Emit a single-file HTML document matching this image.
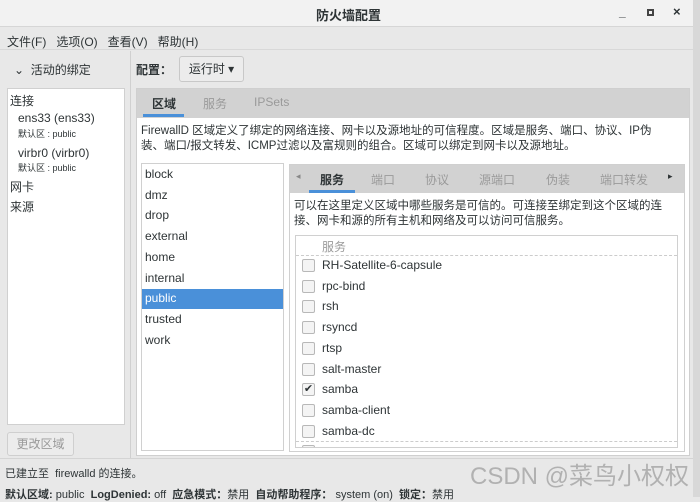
<!DOCTYPE html>
<html><head><meta charset="utf-8"><style>
*{margin:0;padding:0;box-sizing:border-box}
body{width:700px;height:497px;overflow:hidden;background:#e8e8e8;font-family:"Liberation Sans","Noto Sans CJK SC",sans-serif;font-size:12px;color:#2e3436;position:relative}
.a{position:absolute;white-space:nowrap}
.cb{position:absolute;left:6px;width:13px;height:13px;border:1px solid #b8b8b8;border-radius:2px;background:#f4f4f4}
.row{position:absolute;left:0;height:20px;width:100%}
.row span{position:absolute;left:26px;top:2px}
</style></head><body>
<div class="a" style="left:0;top:0;width:700px;height:27px;background:#f2f2f2;border-bottom:1px solid #d6d6d6"></div>
<div class="a" style="left:316px;top:5px;font-weight:bold;font-size:13px">防火墙配置</div>
<div class="a" style="left:619px;top:5px;font-weight:bold">_</div>
<div class="a" style="left:647px;top:9px;width:7px;height:7px;border:2px solid #444"></div>
<div class="a" style="left:673px;top:4px;font-weight:bold;font-size:13px">×</div>
<div class="a" style="left:693px;top:0;width:7px;height:497px;background:#d8d8d8"></div>
<div class="a" style="left:0;top:28px;width:693px;height:22px;border-bottom:1px solid #d8d8d8"></div>
<div class="a" style="left:7px;top:33px">文件(F)&nbsp;&nbsp; 选项(O)&nbsp;&nbsp; 查看(V)&nbsp;&nbsp; 帮助(H)</div>
<div class="a" style="left:130px;top:51px;width:1px;height:407px;background:#d0d0d0"></div>
<div class="a" style="left:14px;top:61px">⌄&nbsp; 活动的绑定</div>
<div class="a" style="left:7px;top:88px;width:118px;height:337px;background:#fff;border:1px solid #d0d0d0"></div>
<div class="a" style="left:10px;top:92px">连接</div>
<div class="a" style="left:18px;top:111px">ens33 (ens33)</div>
<div class="a" style="left:18px;top:127px;font-size:9px">默认区 : public</div>
<div class="a" style="left:18px;top:146px">virbr0 (virbr0)</div>
<div class="a" style="left:18px;top:161px;font-size:9px">默认区 : public</div>
<div class="a" style="left:10px;top:178px">网卡</div>
<div class="a" style="left:10px;top:198px">来源</div>
<div class="a" style="left:7px;top:432px;width:67px;height:24px;border:1px solid #cfcfcf;border-radius:3px;background:#ececec;color:#9a9a9a;text-align:center;line-height:22px">更改区域</div>
<div class="a" style="left:136px;top:61px;font-weight:bold">配置：</div>
<div class="a" style="left:179px;top:56px;width:65px;height:26px;border:1px solid #c8c8c8;border-radius:3px;background:#ececec;text-align:center;line-height:24px">运行时 ▾</div>
<div class="a" style="left:136px;top:88px;width:554px;height:368px;background:#fff;border:1px solid #cfcfcf"></div>
<div class="a" style="left:137px;top:89px;width:552px;height:29px;background:#d2d2d2"></div>
<div class="a" style="left:152px;top:95px;font-weight:bold">区域</div>
<div class="a" style="left:143px;top:114px;width:41px;height:3px;background:#4a90d9"></div>
<div class="a" style="left:203px;top:95px;color:#9a9a9a">服务</div>
<div class="a" style="left:254px;top:95px;color:#9a9a9a">IPSets</div>
<div class="a" style="left:141px;top:124px;font-size:11.5px;line-height:15px">FirewallD 区域定义了绑定的网络连接、网卡以及源地址的可信程度。区域是服务、端口、协议、IP伪<br>装、端口/报文转发、ICMP过滤以及富规则的组合。区域可以绑定到网卡以及源地址。</div>
<div class="a" style="left:141px;top:163px;width:143px;height:288px;border:1px solid #d0d0d0;background:#fff"></div>
<div class="a" style="left:145px;top:164px;line-height:20.7px">block<br>dmz<br>drop<br>external<br>home<br>internal<br><br>trusted<br>work</div>
<div class="a" style="left:142px;top:289px;width:141px;height:20px;background:#4a90d9"></div>
<div class="a" style="left:145px;top:291px;color:#fff">public</div>
<div class="a" style="left:289px;top:164px;width:396px;height:288px;border:1px solid #d0d0d0;background:#fff"></div>
<div class="a" style="left:290px;top:165px;width:394px;height:28px;background:#d2d2d2"></div>
<div class="a" style="left:296px;top:171px;font-size:9px;color:#888">◂</div>
<div class="a" style="left:320px;top:171px;font-weight:bold">服务</div>
<div class="a" style="left:309px;top:190px;width:46px;height:3px;background:#4a90d9"></div>
<div class="a" style="left:371px;top:171px;color:#9a9a9a">端口</div>
<div class="a" style="left:425px;top:171px;color:#9a9a9a">协议</div>
<div class="a" style="left:479px;top:171px;color:#9a9a9a">源端口</div>
<div class="a" style="left:546px;top:171px;color:#9a9a9a">伪装</div>
<div class="a" style="left:600px;top:171px;color:#9a9a9a">端口转发</div>
<div class="a" style="left:668px;top:171px;font-size:9px">▸</div>
<div class="a" style="left:294px;top:199px;font-size:11.5px;line-height:15px">可以在这里定义区域中哪些服务是可信的。可连接至绑定到这个区域的连<br>接、网卡和源的所有主机和网络及可以访问可信服务。</div>
<div class="a" style="left:295px;top:235px;width:383px;height:213px;border:1px solid #d0d0d0;background:#fff;overflow:hidden">
<div class="a" style="left:26px;top:2px;color:#9a9a9a">服务</div>
<div class="a" style="left:0;top:19px;width:100%;border-top:1px dashed #ccc"></div>
<div class="row" style="top:20px"><div class="cb" style="top:3px"></div><span>RH-Satellite-6-capsule</span></div>
<div class="row" style="top:40.7px"><div class="cb" style="top:3px"></div><span>rpc-bind</span></div>
<div class="row" style="top:61.4px"><div class="cb" style="top:3px"></div><span>rsh</span></div>
<div class="row" style="top:82.1px"><div class="cb" style="top:3px"></div><span>rsyncd</span></div>
<div class="row" style="top:102.8px"><div class="cb" style="top:3px"></div><span>rtsp</span></div>
<div class="row" style="top:123.5px"><div class="cb" style="top:3px"></div><span>salt-master</span></div>
<div class="row" style="top:144.2px"><div class="cb" style="top:3px;font-size:11px;line-height:11px;text-align:center">✔</div><span>samba</span></div>
<div class="row" style="top:164.9px"><div class="cb" style="top:3px"></div><span>samba-client</span></div>
<div class="row" style="top:185.6px"><div class="cb" style="top:3px"></div><span>samba-dc</span></div>
<div class="row" style="top:206.3px"><div class="cb" style="top:3px"></div></div>
<div class="a" style="left:0;top:205px;width:100%;border-top:1px dashed #ccc"></div>
</div>
<div class="a" style="left:0;top:458px;width:693px;height:1px;background:#d4d4d4"></div>
<div class="a" style="left:5px;top:465px;font-size:11px">已建立至&nbsp; firewalld 的连接。</div>
<div class="a" style="left:5px;top:486px;font-size:11px"><b>默认区域:</b> public&nbsp; <b>LogDenied:</b> off&nbsp; <b>应急模式：</b>禁用&nbsp; <b>自动帮助程序：</b> system (on)&nbsp; <b>锁定：</b>禁用</div>
<div class="a" style="left:470px;top:456px;font-size:24px;color:#a8a8a8;opacity:.85">CSDN @菜鸟小权权</div>
</body></html>
